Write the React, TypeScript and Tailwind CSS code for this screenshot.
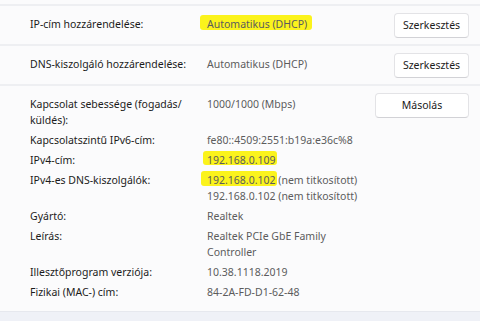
import React from 'react'

function Mark({ children, left = -6, right = -2, top = -2, bottom = 4 }: { children: React.ReactNode; left?: number; right?: number; top?: number; bottom?: number }) {
  return (
    <span className="relative inline-block">
      <span
        className="absolute rounded-[3px] bg-[#fbf31c]"
        style={{ left, right, top, bottom }}
      />
      <span className="relative">{children}</span>
    </span>
  )
}

function EditRow({ label, value, marked }: { label: string; value: string; marked?: boolean }) {
  return (
    <div className="h-[40px] flex items-center bg-[#fbfbfc] border-b-2 border-[#eeeff2]">
      <div className="w-[207px] pl-[30px] text-[#1b1b1b] whitespace-nowrap">{label}</div>
      <div className="flex-1 text-[#5c5c5c] whitespace-nowrap">
        {marked ? <Mark left={-7} right={-5} top={-2} bottom={3}>{value}</Mark> : value}
      </div>
      <button className="mr-[11px] w-[75px] h-[25px] rounded-[4px] bg-white border border-[#e3e3e6] border-b-[#d2d2d6] text-[#1b1b1b] leading-none">
        Szerkesztés
      </button>
    </div>
  )
}

export default function App() {
  const rows: { label: React.ReactNode; value: React.ReactNode }[] = [
    { label: <>Kapcsolat sebessége (fogadás/<br />küldés):</>, value: '1000/1000 (Mbps)' },
    { label: 'Kapcsolatszintű IPv6-cím:', value: 'fe80::4509:2551:b19a:e36c%8' },
    { label: 'IPv4-cím:', value: <Mark left={-4} right={-1} top={-1} bottom={3}>192.168.0.109</Mark> },
    {
      label: 'IPv4-es DNS-kiszolgálók:',
      value: (
        <>
          <Mark left={-6} right={-1} top={-1} bottom={2}>192.168.0.102</Mark> (nem titkosított)
          <br />
          192.168.0.102 (nem titkosított)
        </>
      ),
    },
    { label: 'Gyártó:', value: 'Realtek' },
    { label: 'Leírás:', value: <>Realtek PCIe GbE Family<br />Controller</> },
    { label: 'Illesztőprogram verziója:', value: '10.38.1118.2019' },
    { label: 'Fizikai (MAC-) cím:', value: '84-2A-FD-D1-62-48' },
  ]

  return (
    <div className="w-[480px] h-[321px] overflow-hidden bg-[#eff1f7] text-[10.5px] font-['Noto_Sans','Open_Sans',sans-serif]">
      <div className="h-[6px] bg-[#fbfbfc] border-b-2 border-[#eeeff2]" />
      <EditRow label="IP-cím hozzárendelése:" value="Automatikus (DHCP)" marked />
      <EditRow label="DNS-kiszolgáló hozzárendelése:" value="Automatikus (DHCP)" />
      <div className="bg-[#fbfbfc] border-b border-[#e6e8ee] pt-[7px] pb-[11px] flex">
        <div className="flex-1 flex flex-col gap-[4px] pt-[3px] leading-[16px]">
          {rows.map((r, i) => (
            <div key={i} className="flex">
              <div className="w-[207px] pl-[30px] text-[#1b1b1b] whitespace-nowrap">{r.label}</div>
              <div className="text-[#5c5c5c] whitespace-nowrap">{r.value}</div>
            </div>
          ))}
        </div>
        <button className="mr-[11px] w-[94px] h-[25px] rounded-[4px] bg-white border border-[#e3e3e6] border-b-[#d2d2d6] text-[#1b1b1b] leading-none">
          Másolás
        </button>
      </div>
    </div>
  )
}
